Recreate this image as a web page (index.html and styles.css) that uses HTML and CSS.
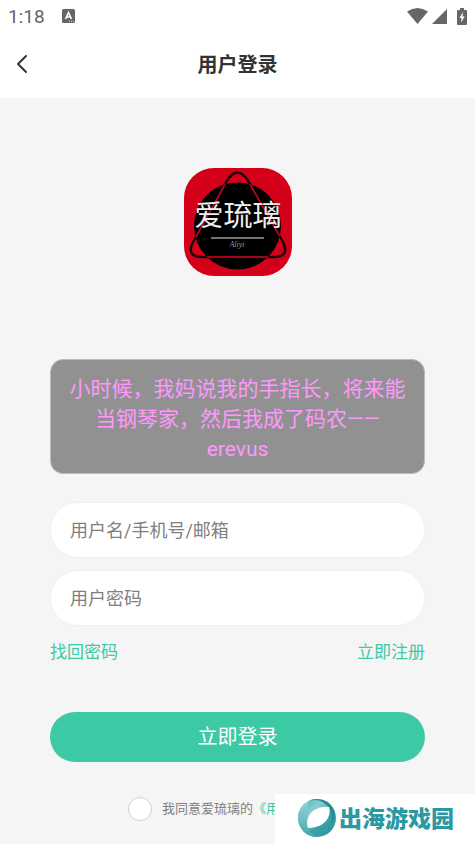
FILE: index.html
```html
<!DOCTYPE html>
<html lang="zh-CN">
<head>
  <meta charset="utf-8">
  <meta name="viewport" content="width=device-width, initial-scale=1">
  <title>用户登录</title>
  <link rel="stylesheet" href="styles.css">
</head>
<body>
  <div class="status-bar">
    <span class="time">1:18</span>
    <svg class="notice-icon" width="13" height="14" viewBox="0 0 13 14">
      <rect width="13" height="14" rx="1.5" fill="#666"/>
      <path d="M3.6 10 6.5 3.5 9.4 10M4.7 8h3.6" fill="none" stroke="#fff" stroke-width="1.7"/>
      <path d="M7 12.3h5" stroke="#ddd" stroke-dasharray="1 1"/>
    </svg>
    <div class="status-icons">
      <svg width="21" height="16" viewBox="0 0 21 16">
        <path d="M0 3.6Q10.5-3.6 21 3.6L10.5 16Z" fill="#666"/>
      </svg>
      <svg width="15" height="15" viewBox="0 0 15 15">
        <path d="M15 0v15H0Z" fill="#666"/>
      </svg>
      <svg class="battery" width="10" height="17" viewBox="0 0 10 17">
        <path d="M3 0h4v2h2q1 0 1 1v13q0 1-1 1H1q-1 0-1-1V3q0-1 1-1h2Z" fill="#666"/>
        <path d="M6 4 2.5 10H4.6L4 14.5 7.7 8.5H5.5Z" fill="#fff"/>
      </svg>
    </div>
  </div>

  <header class="nav">
    <button type="button" class="back" aria-label="返回">
      <svg width="12" height="20" viewBox="0 0 12 20">
        <path d="M10 2 2 10l8 8" fill="none" stroke="#333" stroke-width="2" stroke-linecap="round" stroke-linejoin="round"/>
      </svg>
    </button>
    <h1>用户登录</h1>
  </header>

  <main class="content">
    <svg class="logo" width="108" height="108" viewBox="0 0 108 108" role="img" aria-label="爱琉璃">
      <defs>
        <clipPath id="disc"><circle cx="53.5" cy="58" r="43.5"/></clipPath>
        <path id="triangle" d="M43.500 12Q53.500-3 63.500 12L99 74Q106 88 91 89H17Q2 88 9 74Z"/>
      </defs>
      <rect width="108" height="108" fill="#d4001a"/>
      <circle cx="53.5" cy="58" r="43.5" fill="#000"/>
      <use href="#triangle" fill="none" stroke="#15080a" stroke-width="2.4"/>
      <use href="#triangle" fill="none" stroke="#d4001a" stroke-width="1.5" clip-path="url(#disc)"/>
      <text class="logo-name" x="54" y="58" text-anchor="middle">爱琉璃</text>
      <path d="M27 70h53" stroke="#999" stroke-width="1.5"/>
      <text class="logo-sub" x="53" y="79" text-anchor="middle">Aliyi</text>
    </svg>

    <p class="quote">小时候，我妈说我的手指长，将来能当钢琴家，然后我成了码农——erevus</p>

    <form class="login-form">
      <input type="text" class="field" placeholder="用户名/手机号/邮箱" aria-label="用户名/手机号/邮箱">
      <input type="password" class="field" placeholder="用户密码" aria-label="用户密码">
      <div class="links">
        <a href="#">找回密码</a>
        <a href="#">立即注册</a>
      </div>
      <button type="submit" class="submit">立即登录</button>
      <div class="agree">
        <input type="checkbox" id="agree">
        <label for="agree">我同意爱琉璃的<a href="#">《用户协议》</a></label>
      </div>
    </form>
  </main>

  <div class="watermark">
    <svg width="38" height="38" viewBox="0 0 38 38">
      <defs>
        <linearGradient id="ring" x1="0" y1="0" x2="1" y2="1">
          <stop offset="0" stop-color="#55b3b7"/>
          <stop offset=".35" stop-color="#8accd0"/>
          <stop offset=".6" stop-color="#3ba2aa"/>
          <stop offset="1" stop-color="#2b939e"/>
        </linearGradient>
        <linearGradient id="side" x1="0" y1="0" x2="0" y2="1">
          <stop offset="0" stop-color="#94d1d4"/>
          <stop offset="1" stop-color="#45a9b0"/>
        </linearGradient>
      </defs>
      <circle cx="19" cy="19" r="19" fill="url(#ring)"/>
      <path d="M10 2.5C3 7-1 13 0 20c1 10 8 18 19 18-7-3-11-9-10-16Z" fill="url(#side)"/>
      <path d="M10 2Q25-2 32 11 35 17 33 27 38 19 36 11 31 0 19 0 14 0 10 2Z" fill="#258d99"/>
      <path d="M10 29C6 18 16 6 31 8 34 17 27 29 10 29Z" fill="#fff"/>
    </svg>
    <span>出海游戏园</span>
  </div>
</body>
</html>
```

FILE: styles.css
```css
* {
  box-sizing: border-box;
}
body {
  margin: 0;
  min-height: 100vh;
  background-color: #f5f5f5;
  font-family: Roboto, "Noto Sans CJK SC", sans-serif;
  color: #333;
  overflow: hidden;
}
.status-bar {
  display: flex;
  align-items: center;
  height: 32px;
  padding: 0 8px;
  background-color: #fff;
}
.time {
  font-size: 19px;
  color: #666;
}
.notice-icon {
  margin-left: 17px;
}
.status-icons {
  display: flex;
  align-items: center;
  gap: 4px;
  margin-left: auto;
}
.battery {
  margin-left: 6px;
}
.nav {
  display: grid;
  grid-template-columns: 48px 1fr 48px;
  align-items: center;
  height: 66px;
  padding-bottom: 2px;
  background-color: #fff;
}
.back {
  display: flex;
  padding: 8px 16px;
  border: none;
  background: none;
  cursor: pointer;
}
.nav h1 {
  margin: 0;
  padding-bottom: 2px;
  font-size: 20px;
  font-weight: bold;
  text-align: center;
}
.content {
  padding: 70px 50px 20px;
}
.logo {
  display: block;
  margin: 0 auto;
  border-radius: 30px;
}
.logo-name {
  font-family: "Noto Sans CJK SC", sans-serif;
  font-size: 29px;
  fill: #eee;
}
.logo-sub {
  font-family: "Liberation Serif", serif;
  font-size: 8px;
  font-style: italic;
  fill: #999;
}
.quote {
  margin: 83px 0 28px;
  padding: 14px 18px 9px;
  border: 1px solid #bbb;
  border-radius: 13px;
  background-color: #919191;
  color: #ff97ff;
  font-size: 21px;
  line-height: 30px;
  text-align: center;
}
.login-form {
  display: flex;
  flex-direction: column;
}
.field {
  width: 100%;
  height: 56px;
  margin-bottom: 12px;
  padding: 0 19px;
  border: 1px solid #f1f1f1;
  border-radius: 28px;
  background-color: #fff;
  font-family: inherit;
  font-size: 18px;
}
.field::placeholder {
  color: #808080;
}
.links {
  display: flex;
  justify-content: space-between;
  font-size: 17px;
}
a {
  color: #3dc9a5;
  text-decoration: none;
}
.submit {
  height: 50px;
  margin-top: 49px;
  padding-bottom: 4px;
  border: none;
  border-radius: 25px;
  background-color: #3dc9a5;
  color: #fff;
  font-family: inherit;
  font-size: 20px;
  cursor: pointer;
}
.agree {
  display: flex;
  align-items: center;
  gap: 10px;
  margin-top: 35px;
  padding-left: 78px;
  font-size: 13px;
  color: #808080;
}
.agree label {
  padding-bottom: 3px;
}
.agree input {
  appearance: none;
  width: 24px;
  height: 24px;
  margin: 0;
  border: 1px solid #d1d1d1;
  border-radius: 50%;
  background-color: #fff;
}
.agree input:checked {
  background-color: #3dc9a5;
}
.watermark {
  position: fixed;
  right: 0;
  bottom: 0;
  display: flex;
  align-items: center;
  gap: 3px;
  width: 200px;
  height: 50px;
  padding: 0 0 2px 23px;
  background-color: #fff;
  color: #2b99a3;
  font-size: 23px;
  font-weight: 900;
}
.watermark span {
  padding-bottom: 2px;
}
```
